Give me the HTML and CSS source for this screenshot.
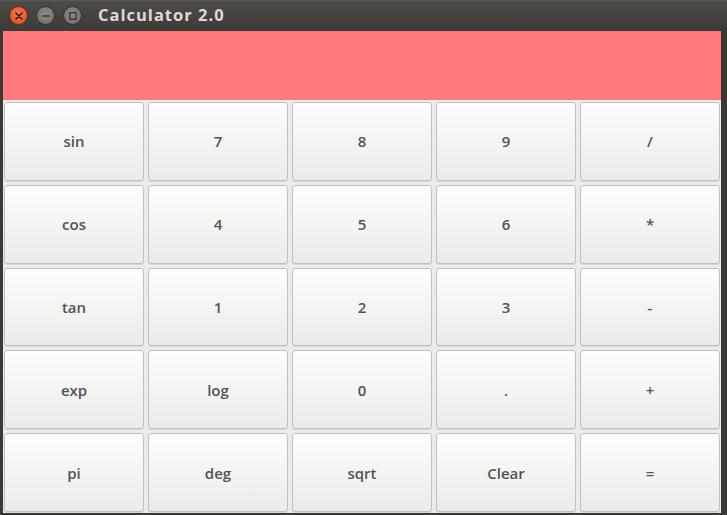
FILE: index.html
```html
<!DOCTYPE html>
<html>
<head>
<meta charset="utf-8">
<title>Calculator 2.0</title>
<link rel="stylesheet" href="styles.css">
</head>
<body>
<div class="window">
  <div class="titlebar">
    <div class="controls">
      <span class="ctl close">
        <svg width="8" height="8" viewBox="0 0 8 8"><path d="M1 1L7 7M7 1L1 7" stroke="#3a1a0c" stroke-width="1.6" stroke-linecap="round"/></svg>
      </span>
      <span class="ctl min">
        <svg width="8" height="8" viewBox="0 0 8 8"><path d="M0.5 4H7.5" stroke="#3c3b37" stroke-width="1.6"/></svg>
      </span>
      <span class="ctl max">
        <svg width="8" height="8" viewBox="0 0 8 8"><rect x="0.8" y="0.8" width="6.4" height="6.4" fill="none" stroke="#3c3b37" stroke-width="1.4" rx="0.5"/></svg>
      </span>
    </div>
    <div class="title">Calculator 2.0</div>
  </div>
  <div class="client">
    <div class="display"></div>
    <div class="keys">
      <button class="key">sin</button>
      <button class="key">7</button>
      <button class="key">8</button>
      <button class="key">9</button>
      <button class="key">/</button>
      <button class="key">cos</button>
      <button class="key">4</button>
      <button class="key">5</button>
      <button class="key">6</button>
      <button class="key">*</button>
      <button class="key">tan</button>
      <button class="key">1</button>
      <button class="key">2</button>
      <button class="key">3</button>
      <button class="key">-</button>
      <button class="key">exp</button>
      <button class="key">log</button>
      <button class="key">0</button>
      <button class="key">.</button>
      <button class="key">+</button>
      <button class="key">pi</button>
      <button class="key">deg</button>
      <button class="key">sqrt</button>
      <button class="key">Clear</button>
      <button class="key">=</button>
    </div>
  </div>
</div>
</body>
</html>
```
FILE: styles.css
```css
html, body {
  margin: 0;
  padding: 0;
  background: #2f2e2b;
  width: 727px;
  height: 515px;
  overflow: hidden;
}
.window {
  display: flex;
  flex-direction: column;
  width: 727px;
  height: 515px;
  background: #3a3935;
}
.titlebar {
  height: 30px;
  flex: none;
  display: flex;
  align-items: center;
  background: linear-gradient(#4d4c47, #3c3b37);
  border-top: 1px solid #5a5954;
  box-sizing: border-box;
}
.controls {
  display: flex;
  gap: 8px;
  padding-left: 9px;
}
.ctl {
  width: 19px;
  height: 19px;
  border-radius: 50%;
  display: flex;
  align-items: center;
  justify-content: center;
  box-sizing: border-box;
}
.close {
  background: radial-gradient(circle at 50% 40%, #f47a4c, #df4b1c);
  border: 1px solid #6a2b14;
}
.min, .max {
  background: radial-gradient(circle at 50% 40%, #8d8b85, #6c6a65);
  border: 1px solid #34332f;
}
.title {
  margin-left: 16px;
  font-family: "Open Sans", "DejaVu Sans", sans-serif;
  font-weight: 700;
  font-size: 16.5px;
  color: #dfdbd2;
  letter-spacing: 1px;
  padding-bottom: 2px;
}
.client {
  flex: 1;
  display: flex;
  flex-direction: column;
  margin: 1px 6px 2px 3px;
  background: #ebebeb;
}
.display {
  height: 69px;
  flex: none;
  background: #ff7b7b;
}
.keys {
  flex: 1;
  display: grid;
  grid-template-columns: repeat(5, 1fr);
  grid-template-rows: repeat(5, 1fr);
  gap: 4px;
  padding: 2px 1px 1px 1px;
}
.key {
  margin: 0;
  padding: 0;
  border: 1px solid #c2c0bd;
  border-radius: 3px;
  background: linear-gradient(#fdfdfd, #f4f4f3 50%, #ebebea);
  box-shadow: 0 1px 0 rgba(0,0,0,0.08);
  font-family: "Open Sans", "DejaVu Sans", sans-serif;
  font-weight: 600;
  font-size: 15px;
  color: #535353;
  display: flex;
  align-items: center;
  justify-content: center;
}
```
